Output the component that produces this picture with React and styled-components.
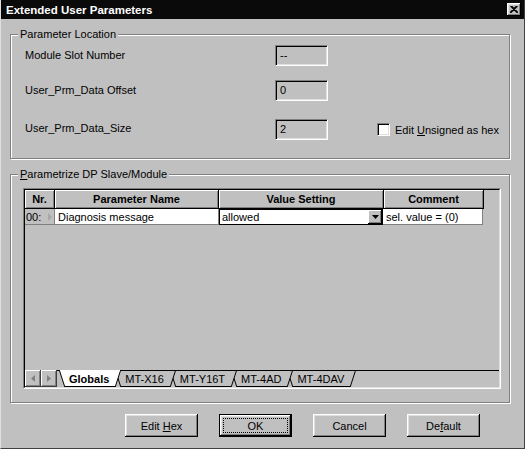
import React from 'react';
import styled, { createGlobalStyle } from 'styled-components';

const Global = createGlobalStyle`
  html, body { margin: 0; padding: 0; background: #c0c0c0; }
  body { font-family: "Liberation Sans", Arial, sans-serif; font-size: 11px; color: #000; }
  * { box-sizing: border-box; }
`;

const Window = styled.div`
  width: 525px;
  height: 449px;
  background: #c0c0c0;
  display: flex;
  flex-direction: column;
  overflow: hidden;
  border-left: 1px solid #dfdfdf;
  border-right: 1px solid #404040;
  border-bottom: 1px solid #404040;
`;

const TitleBar = styled.div`
  height: 19px;
  flex: none;
  background: #0a0a0a;
  color: #fff;
  display: flex;
  align-items: center;
  justify-content: space-between;
  padding: 0 3px 0 5px;
  font-weight: bold;
  font-size: 11.5px;
`;

const CloseButton = styled.div`
  width: 14px;
  height: 13px;
  background: #c0c0c0;
  display: flex;
  align-items: center;
  justify-content: center;
  box-shadow: inset -1px -1px #000, inset 1px 1px #fff, inset -2px -2px #808080, inset 2px 2px #dfdfdf;
`;

const Body = styled.div`
  flex: 1;
  display: flex;
  flex-direction: column;
  padding: 0 14px 0 9px;
`;

const Group = styled.fieldset`
  margin: ${p => p.$top}px 0 0 0;
  padding: 0 9px 0 ${p => p.$padLeft}px;
  min-width: 0;
  height: ${p => p.$height}px;
  border: 1px solid #808080;
  box-shadow: inset 1px 1px #fff, 1px 1px #fff;
  display: flex;
  flex-direction: column;
`;

const Legend = styled.legend`
  margin-left: ${p => p.$shift}px;
  padding: 0 2px;
  line-height: 13px;
  height: 13px;
  background: #c0c0c0;
`;

const FieldRow = styled.div`
  display: flex;
  align-items: center;
  height: 20px;
  margin-top: ${p => p.$top}px;
`;

const FieldLabel = styled.div`
  width: 250px;
  margin-top: ${p => p.$nudge || 0}px;
`;

const ReadField = styled.div`
  width: 53px;
  height: 21px;
  border: 1px solid;
  border-color: #808080 #fff #fff #808080;
  box-shadow: inset 1px 1px #000, inset -1px -1px #dfdfdf;
  padding: 3px 0 0 4px;
  line-height: 13px;
`;

const CheckArea = styled.label`
  display: flex;
  align-items: center;
  gap: 5px;
  margin-left: 49px;
  margin-top: 1px;
`;

const CheckBox = styled.span`
  width: 13px;
  height: 13px;
  background: #fff;
  border: 1px solid;
  border-color: #808080 #fff #fff #808080;
  box-shadow: inset 1px 1px #000, inset -1px -1px #dfdfdf;
`;

const GridOuter = styled.div`
  margin-top: 7px;
  width: 478px;
  height: 201px;
  border: 1px solid;
  border-color: #808080 #fff #fff #808080;
  display: flex;
`;

const GridInner = styled.div`
  flex: 1;
  border: 1px solid;
  border-color: #000 #dfdfdf #dfdfdf #000;
  display: flex;
  flex-direction: column;
`;

const HeaderRow = styled.div`
  display: flex;
  height: 19px;
  flex: none;
`;

const HeaderCell = styled.div`
  width: ${p => p.$w}px;
  flex: none;
  display: flex;
  align-items: center;
  justify-content: center;
  font-weight: bold;
  border-right: 1px solid #000;
  border-bottom: 1px solid #000;
  box-shadow: inset 1px 1px #fff, inset -1px -1px #808080;
`;

const DataRow = styled.div`
  display: flex;
  height: 16px;
  flex: none;
`;

const NrCell = styled.div`
  width: 30px;
  flex: none;
  display: flex;
  align-items: center;
  justify-content: space-between;
  padding: 0 2px 0 1px;
  border-right: 1px solid #808080;
  border-bottom: 1px solid #808080;
`;

const Cell = styled.div`
  width: ${p => p.$w}px;
  flex: none;
  background: #fff;
  display: flex;
  align-items: center;
  padding-left: 3px;
  border-right: 1px solid #808080;
  border-bottom: 1px solid #808080;
  white-space: nowrap;
`;

const ComboCell = styled.div`
  width: ${p => p.$w}px;
  flex: none;
  background: #fff;
  display: flex;
  align-items: center;
  justify-content: space-between;
  padding-left: 2px;
  border: 1px solid #000;
`;

const DropButton = styled.div`
  width: 14px;
  height: 14px;
  background: #c0c0c0;
  display: flex;
  align-items: center;
  justify-content: center;
  box-shadow: inset -1px -1px #000, inset 1px 1px #fff, inset -2px -2px #808080;
`;

const GridSpace = styled.div`
  flex: 1;
`;

const TabBar = styled.div`
  height: 17px;
  flex: none;
  display: flex;
  align-items: stretch;
`;

const ScrollBtn = styled.div`
  width: 16px;
  flex: none;
  display: flex;
  align-items: center;
  justify-content: center;
  box-shadow: inset -1px -1px #404040, inset 1px 1px #fff, inset -2px -2px #808080;
`;

const TabGap = styled.div`
  width: 2px;
  flex: none;
  border-top: 1px solid #000;
`;

const TabWrap = styled.div`
  display: flex;
  flex: none;
  margin-left: ${p => (p.$first ? 0 : -6)}px;
  position: relative;
  z-index: ${p => p.$z};
`;

const TabLabel = styled.div`
  display: flex;
  align-items: center;
  padding: 0 6px 0 4px;
  background: ${p => (p.$active ? '#fff' : '#c0c0c0')};
  border-top: 1px solid ${p => (p.$active ? '#fff' : '#000')};
  border-bottom: 1px solid #000;
  font-weight: ${p => (p.$active ? 'bold' : 'normal')};
  font-size: 11px;
  white-space: nowrap;
`;

const TabFill = styled.div`
  flex: 1;
  border-top: 1px solid #000;
`;

const ButtonRow = styled.div`
  display: flex;
  gap: 21px;
  margin-top: 11px;
  padding-left: 115px;
`;

const Button = styled.div`
  position: relative;
  width: 73px;
  height: 23px;
  display: flex;
  align-items: center;
  justify-content: center;
  background: #c0c0c0;
  border: ${p => (p.$default ? '1px solid #000' : 'none')};
  box-shadow: inset -1px -1px #000, inset 1px 1px #fff, inset -2px -2px #808080, inset 2px 2px #dfdfdf;
  &::after {
    content: '';
    display: ${p => (p.$default ? 'block' : 'none')};
    position: absolute;
    inset: 3px;
    border: 1px dotted #000;
  }
`;

const Edge = ({ side, active }) => {
  const fill = active ? '#fff' : '#c0c0c0';
  if (side === 'left') {
    return (
      <svg width="6" height="17" viewBox="0 0 6 17" style={{ display: 'block', flex: 'none' }}>
        <polygon points="0,0 6,0 6,17" fill={fill} />
        {!active && <line x1="0" y1="0.5" x2="6" y2="0.5" stroke="#000" />}
        <line x1="0.3" y1="0" x2="5.8" y2="17" stroke="#000" strokeWidth="1" />
      </svg>
    );
  }
  return (
    <svg width="6" height="17" viewBox="0 0 6 17" style={{ display: 'block', flex: 'none' }}>
      <polygon points="0,0 6,0 0,17" fill={fill} />
      {!active && <line x1="0" y1="0.5" x2="6" y2="0.5" stroke="#000" />}
      <line x1="5.7" y1="0" x2="0.2" y2="17" stroke="#000" strokeWidth="1" />
    </svg>
  );
};

const Tab = ({ label, active, first, z }) => (
  <TabWrap $first={first} $z={z}>
    <Edge side="left" active={active} />
    <TabLabel $active={active}>{label}</TabLabel>
    <Edge side="right" active={active} />
  </TabWrap>
);

const tabs = ['Globals', 'MT-X16', 'MT-Y16T', 'MT-4AD', 'MT-4DAV'];

export default function App() {
  return (
    <>
      <Global />
      <Window>
        <TitleBar>
          <span>Extended User Parameters</span>
          <CloseButton>
            <svg width="8" height="7" viewBox="0 0 8 7">
              <path d="M0.5 0 L7.5 7 M1.5 0 L8 6.5 M7.5 0 L0.5 7 M6.5 0 L0 6.5" stroke="#000" strokeWidth="1.2" />
            </svg>
          </CloseButton>
        </TitleBar>
        <Body>
          <Group $top={9} $height={131} $padLeft={14}>
            <Legend $shift={-7}>Parameter Location</Legend>
            <FieldRow $top={4}>
              <FieldLabel>Module Slot Number</FieldLabel>
              <ReadField>--</ReadField>
            </FieldRow>
            <FieldRow $top={15}>
              <FieldLabel>User_Prm_Data Offset</FieldLabel>
              <ReadField>0</ReadField>
            </FieldRow>
            <FieldRow $top={19}>
              <FieldLabel $nudge={-3}>User_Prm_Data_Size</FieldLabel>
              <ReadField>2</ReadField>
              <CheckArea>
                <CheckBox />
                <span>
                  Edit <u>U</u>nsigned as hex
                </span>
              </CheckArea>
            </FieldRow>
          </Group>
          <Group $top={9} $height={235} $padLeft={12}>
            <Legend $shift={-5}>
              <u>P</u>arametrize DP Slave/Module
            </Legend>
            <GridOuter>
              <GridInner>
                <HeaderRow>
                  <HeaderCell $w={30}>Nr.</HeaderCell>
                  <HeaderCell $w={164}>Parameter Name</HeaderCell>
                  <HeaderCell $w={165}>Value Setting</HeaderCell>
                  <HeaderCell $w={100}>Comment</HeaderCell>
                </HeaderRow>
                <DataRow>
                  <NrCell>
                    <span>00:</span>
                    <svg width="4" height="8" viewBox="0 0 4 8">
                      <polygon points="0,0 4,4 0,8" fill="#a8a8a8" />
                    </svg>
                  </NrCell>
                  <Cell $w={164}>Diagnosis message</Cell>
                  <ComboCell $w={164}>
                    <span>allowed</span>
                    <DropButton>
                      <svg width="7" height="4" viewBox="0 0 7 4">
                        <polygon points="0,0 7,0 3.5,4" fill="#000" />
                      </svg>
                    </DropButton>
                  </ComboCell>
                  <Cell $w={100}>sel. value = (0)</Cell>
                </DataRow>
                <GridSpace />
                <TabBar>
                  <ScrollBtn>
                    <svg width="4" height="7" viewBox="0 0 4 7">
                      <polygon points="4,0 0,3.5 4,7" fill="#808080" />
                    </svg>
                  </ScrollBtn>
                  <ScrollBtn>
                    <svg width="4" height="7" viewBox="0 0 4 7">
                      <polygon points="0,0 4,3.5 0,7" fill="#808080" />
                    </svg>
                  </ScrollBtn>
                  <TabGap />
                  {tabs.map((t, i) => (
                    <Tab key={t} label={t} active={i === 0} first={i === 0} z={i === 0 ? 10 : 9 - i} />
                  ))}
                  <TabFill />
                </TabBar>
              </GridInner>
            </GridOuter>
          </Group>
          <ButtonRow>
            <Button>
              <span>
                Edit <u>H</u>ex
              </span>
            </Button>
            <Button $default>
              <span>OK</span>
            </Button>
            <Button>
              <span>Cancel</span>
            </Button>
            <Button>
              <span>
                De<u>f</u>ault
              </span>
            </Button>
          </ButtonRow>
        </Body>
      </Window>
    </>
  );
}
